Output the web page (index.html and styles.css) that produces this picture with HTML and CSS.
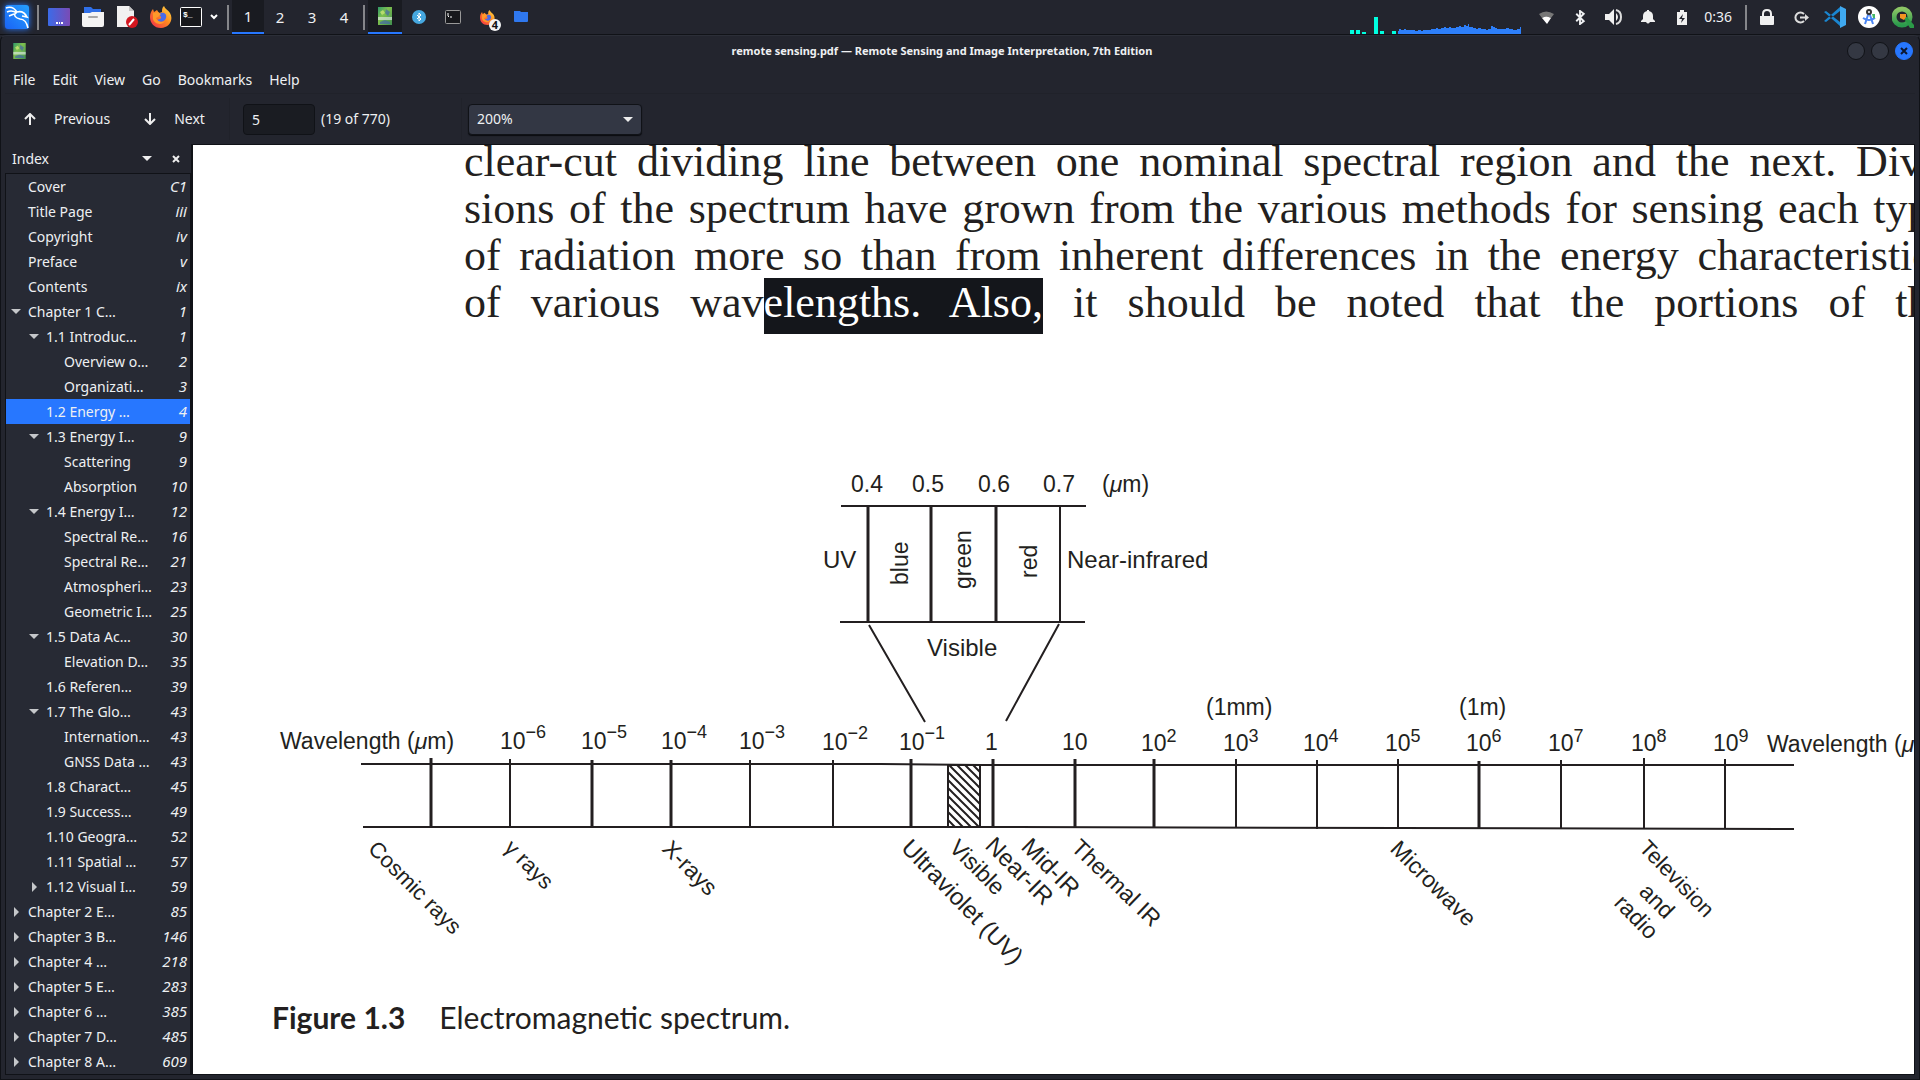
FILE: index.html
```html
<!DOCTYPE html>
<html lang="en">
<head>
<meta charset="utf-8">
<title>remote sensing.pdf — Remote Sensing and Image Interpretation, 7th Edition</title>
<link rel="stylesheet" href="styles.css">
</head>
<body>
<svg class="defs" width="0" height="0" aria-hidden="true">
  <defs>
    <linearGradient id="g-kali" x1="0" y1="1" x2="1" y2="0"><stop offset="0" stop-color="#1a63f5"/><stop offset="1" stop-color="#25a0ff"/></linearGradient>
    <linearGradient id="g-desk" x1="0" y1="0" x2="1" y2="0"><stop offset="0" stop-color="#3b6be8"/><stop offset="1" stop-color="#7a4bb5"/></linearGradient>
    <linearGradient id="g-fox" x1="1" y1="0" x2="0" y2="1"><stop offset="0" stop-color="#ffe14a"/><stop offset=".45" stop-color="#ff8a1f"/><stop offset="1" stop-color="#f2264f"/></linearGradient>
    <linearGradient id="g-book" x1="0" y1="0" x2="1" y2="1"><stop offset="0" stop-color="#2f9a6a"/><stop offset=".4" stop-color="#7fc04e"/><stop offset="1" stop-color="#3f8f4f"/></linearGradient>
    <linearGradient id="g-qgis" x1="0" y1="0" x2="0" y2="1"><stop offset="0" stop-color="#8cc665"/><stop offset="1" stop-color="#2a9a4c"/></linearGradient>
    <symbol id="i-fox" viewBox="0 0 22 22">
      <path fill="url(#g-fox)" d="M14 0c1 3 4 4 6 7 4 7-1 15-9 15C4 22 0 17 0 11c0-3 1-6 3-8l1 3 3-2 2 3 3-1c0-3 0-4 2-6z"/>
      <path fill="#4a6be8" d="M9 7l2 0c4-1 6 2 5 5-1 4-7 5-9 2l3-1c2-1 1-3-1-4z"/>
      <path fill="#ff9a2a" d="M3 7l5-1 3 2-3 3-2 1c2 4 6 5 9 3-3 5-11 3-12-2z"/>
    </symbol>
    <symbol id="i-book" viewBox="0 0 14 18">
      <rect width="14" height="18" fill="url(#g-book)"/>
      <path fill="#4668a8" opacity=".7" d="M8 2l4 3-2 4-3-3zM2 15l5-2 5 2v2H2z"/>
      <path fill="#d9e8dc" opacity=".7" d="M0 10h14v3H0z"/>
      <path fill="#b7dd6d" d="M2 5l3-2 2 3-3 2z"/>
    </symbol>
    <symbol id="i-bt" viewBox="0 0 12 16"><path fill="none" stroke="currentColor" stroke-width="2" d="M2 4l8 8-4 3V1l4 3-8 8"/></symbol>
  </defs>
</svg>

<header class="panel">
  <div class="launchers">
    <button class="tile kali" aria-label="Applications"><svg width="26" height="26" viewBox="0 0 26 26"><rect x="1" y="1" width="24" height="24" rx="3" fill="url(#g-kali)"/><path fill="none" stroke="#fff" stroke-width="1.6" d="M2 4c5-2 9 1 11 4M3 8c4-2 7-1 10 1M12 8c-3 4 0 6 4 7 4 0 7 4 8 9M13 8c4-1 8 1 10 5M20 9l3 4-5-1M5 12l5-2"/></svg></button>
    <span class="rule"></span>
    <button class="tile" aria-label="Show desktop"><svg width="22" height="18"><rect width="22" height="18" rx="1" fill="url(#g-desk)"/><path fill="#fff" d="M8 14h2v2H8zM11 14h1v2h-1zM13 14h2v2h-2z"/></svg></button>
    <button class="tile" aria-label="Files"><svg width="22" height="20"><path fill="#2f6fe8" d="M2 0h7l2 2h8v6H2z"/><path fill="#f4f4f4" d="M0 6h8l2-1h12v13q0 2-2 2H2q-2 0-2-2z"/><rect x="6" y="9" width="10" height="2" rx="1" fill="#a8a8a8"/></svg></button>
    <button class="tile" aria-label="Text editor"><svg width="22" height="22"><path fill="#f1f1f1" d="M1 0h12l5 5v16H1z"/><path fill="#c4c4c4" d="M13 0l5 5h-5z"/><circle cx="16" cy="16" r="6" fill="#d3161f"/><path stroke="#fff" stroke-width="2" d="M13 19l5-6"/></svg></button>
    <button class="tile" aria-label="Firefox"><svg width="22" height="22"><use href="#i-fox"/></svg></button>
    <button class="tile narrow" aria-label="Terminal"><svg width="22" height="20"><rect x=".5" y=".5" width="21" height="19" rx="1" fill="#17181c" stroke="#fff"/><text x="3" y="10" class="prompt">$_</text></svg></button>
    <button class="more" aria-label="More terminals"><svg width="8" height="6"><path fill="none" stroke="#fff" stroke-width="2" d="M1 1l3 3 3-3"/></svg></button>
    <span class="rule"></span>
    <nav class="spaces" aria-label="Workspaces">
      <button class="space current">1</button><button class="space">2</button><button class="space">3</button><button class="space">4</button>
    </nav>
    <span class="rule"></span>
    <button class="tile current" aria-label="Document viewer"><svg width="14" height="18"><use href="#i-book"/></svg></button>
    <button class="tile" aria-label="Bluetooth manager"><svg width="14" height="14"><circle cx="7" cy="7" r="7" fill="#46a8e0"/><path fill="none" stroke="#fff" d="M5 5l4 4-2 2V3l2 2-4 4"/></svg></button>
    <button class="tile" aria-label="Terminal window"><svg width="16" height="14"><rect x=".5" y=".5" width="15" height="13" rx="1" fill="#17181c" stroke="#999"/><path stroke="#fff" fill="none" d="M3 3v3l1 1M5 7h2"/></svg></button>
    <button class="tile" aria-label="Firefox windows"><svg width="15" height="15"><use href="#i-fox"/></svg><span class="count">4</span></button>
    <button class="tile" aria-label="Folder"><svg width="14" height="12"><path fill="#2f78ee" d="M0 0h6l1 1h7v9q0 1-1 1H1q-1 0-1-1z"/></svg></button>
  </div>
  <div class="tray">
    <svg class="graph" width="176" height="34">
      <path fill="#00ffe0" d="M0 30h4v4H0zM6 30h4v4H6zM12 32h4v2h-4zM24 17h4v17h-4zM30 31h4v3h-4zM42 31h4v3h-4z"/>
      <path fill="#2d7ffa" d="M48 34v-3h1v-2h2v1h3v-1h2v1h9v1h3v-1h3v1h2v-1h8v-1h5v-1h2v1h3v-1h3v-1h2v1h3v-1h2v1h5v-1h3v-1h2v1h3v-2h2v1h2v-2h1v3h4v1h3v1h2v-1h3v1h5v1h2v-1h3v-3h2v1h2v1h2v1h9v-1h3v1h4v1h4v-1h3v-2h1v7z"/>
    </svg>
    <button class="tile" aria-label="Network"><svg width="15" height="13"><path fill="#777" d="M0 3q7-5 15 0l-3 4q-5-3-9 0z"/><path fill="#fff" d="M3 7q4-3 9 0l-4 6z"/></svg></button>
    <button class="tile" aria-label="Bluetooth"><svg width="12" height="15"><use href="#i-bt"/></svg></button>
    <button class="tile" aria-label="Volume"><svg width="18" height="16"><path fill="#f0f0f0" d="M0 5h4l5-5v16l-5-5H0zM11 4q4 4 0 8z"/><path fill="none" stroke="#ddd" stroke-width="2" d="M11 1q5 1 5 7t-5 7"/></svg></button>
    <button class="tile" aria-label="Notifications"><svg width="14" height="14"><path fill="#f0f0f0" d="M6 0h2v1q4 1 4 5v3l2 2v1H0v-1l2-2V6q0-4 4-5zM5 12h4q-2 3-4 0z"/></svg></button>
    <button class="tile" aria-label="Battery"><svg width="10" height="15"><path fill="#f0f0f0" d="M3 0h4v2h3v13H0V2h3z"/><path fill="#23252e" d="M6 4L2 9h3l-1 4 4-5H5z"/></svg></button>
    <time class="clock">0:36</time>
    <span class="rule"></span>
    <button class="tile" aria-label="Lock screen"><svg width="14" height="16"><path fill="#f0f0f0" d="M0 7h14v8q0 1-1 1H1q-1 0-1-1z"/><path fill="none" stroke="#f0f0f0" stroke-width="2" d="M3 8V5q0-4 4-4t4 4v3"/></svg></button>
    <button class="tile" aria-label="Log out"><svg width="15" height="13"><path fill="none" stroke="#ddd" stroke-width="2" d="M10 3a5 5 0 1 0 0 7M6 6.500h6"/><path fill="#ddd" d="M11 3l4 3.500-4 3.500z"/></svg></button>
    <button class="tile" aria-label="Code editor"><svg width="22" height="22"><path fill="#1a86d0" d="M0 6l2-1 14 11v4zM0 15l2 1L16 5V1z"/><path fill="#3fa9f0" d="M16 0l6 3v16l-6 3z"/></svg></button>
    <button class="tile" aria-label="Android Studio"><svg width="22" height="22"><circle cx="11" cy="11" r="11" fill="#fff"/><path fill="none" stroke="#4b86f4" stroke-width="2" d="M11 6L7 18M11 6l4 12M5 12q6 4 12 0"/><circle cx="11" cy="6" r="2" fill="#fff" stroke="#333" stroke-width="2"/><path fill="#45b866" d="M14 8h3v4h-2z"/></svg></button>
    <button class="tile" aria-label="QGIS"><svg width="22" height="22"><circle cx="10" cy="11" r="8" fill="none" stroke="url(#g-qgis)" stroke-width="5"/><path fill="#2b9a47" d="M11 11l4 0 7 8v3h-4z"/><path fill="#f39421" d="M8 8h6v3l-2 3-4-2z"/></svg></button>
  </div>
</header>

<div class="window">
  <div class="titlebar">
    <svg width="13" height="16"><use href="#i-book"/></svg>
    <h1 class="title">remote sensing.pdf — Remote Sensing and Image Interpretation, 7th Edition</h1>
    <div class="controls">
      <button class="dot" aria-label="Minimize"></button><button class="dot" aria-label="Maximize"></button>
      <button class="dot close" aria-label="Close"><svg width="8" height="8"><path stroke="#0c1730" stroke-width="2" d="M1 1l6 6M7 1L1 7"/></svg></button>
    </div>
  </div>
  <nav class="menubar">
    <button>File</button><button>Edit</button><button>View</button><button>Go</button><button>Bookmarks</button><button>Help</button>
  </nav>
  <div class="toolbar">
    <div class="group steps">
      <button class="step"><svg width="12" height="12"><path fill="none" stroke="#eee" stroke-width="2" d="M6 12V2M1 6l5-5 5 5"/></svg>Previous</button>
      <button class="step"><svg width="12" height="12"><path fill="none" stroke="#eee" stroke-width="2" d="M6 0v10M1 6l5 5 5-5"/></svg>Next</button>
    </div>
    <div class="group pager">
      <input id="page" class="page-box" type="text" value="5" aria-label="Page">
      <label for="page">(19 of 770)</label>
    </div>
    <div class="group zoomer">
      <select class="zoom" aria-label="Zoom"><option>200%</option></select>
    </div>
  </div>

  <div class="content">
    <aside class="sidebar">
      <div class="side-head">
        <span class="side-title">Index</span>
        <button aria-label="Choose side pane"><svg width="10" height="5"><path fill="#eee" d="M0 0h10L5 5z"/></svg></button>
        <button aria-label="Close side pane"><svg width="8" height="8"><path stroke="#eee" stroke-width="2" d="M1 1l6 6M7 1L1 7"/></svg></button>
      </div>
      <ul class="tree">
        <li><a href="#">Cover<i>C1</i></a></li>
        <li><a href="#">Title Page<i>iii</i></a></li>
        <li><a href="#">Copyright<i>iv</i></a></li>
        <li><a href="#">Preface<i>v</i></a></li>
        <li><a href="#">Contents<i>ix</i></a></li>
        <li class="open"><a href="#">Chapter 1 C…<i>1</i></a></li>
        <li class="l2 open"><a href="#">1.1 Introduc…<i>1</i></a></li>
        <li class="l3"><a href="#">Overview o…<i>2</i></a></li>
        <li class="l3"><a href="#">Organizati…<i>3</i></a></li>
        <li class="l2 selected"><a href="#">1.2 Energy …<i>4</i></a></li>
        <li class="l2 open"><a href="#">1.3 Energy I…<i>9</i></a></li>
        <li class="l3"><a href="#">Scattering<i>9</i></a></li>
        <li class="l3"><a href="#">Absorption<i>10</i></a></li>
        <li class="l2 open"><a href="#">1.4 Energy I…<i>12</i></a></li>
        <li class="l3"><a href="#">Spectral Re…<i>16</i></a></li>
        <li class="l3"><a href="#">Spectral Re…<i>21</i></a></li>
        <li class="l3"><a href="#">Atmospheri…<i>23</i></a></li>
        <li class="l3"><a href="#">Geometric I…<i>25</i></a></li>
        <li class="l2 open"><a href="#">1.5 Data Ac…<i>30</i></a></li>
        <li class="l3"><a href="#">Elevation D…<i>35</i></a></li>
        <li class="l2"><a href="#">1.6 Referen…<i>39</i></a></li>
        <li class="l2 open"><a href="#">1.7 The Glo…<i>43</i></a></li>
        <li class="l3"><a href="#">Internation…<i>43</i></a></li>
        <li class="l3"><a href="#">GNSS Data …<i>43</i></a></li>
        <li class="l2"><a href="#">1.8 Charact…<i>45</i></a></li>
        <li class="l2"><a href="#">1.9 Success…<i>49</i></a></li>
        <li class="l2"><a href="#">1.10 Geogra…<i>52</i></a></li>
        <li class="l2"><a href="#">1.11 Spatial …<i>57</i></a></li>
        <li class="l2 shut"><a href="#">1.12 Visual I…<i>59</i></a></li>
        <li class="shut"><a href="#">Chapter 2 E…<i>85</i></a></li>
        <li class="shut"><a href="#">Chapter 3 B…<i>146</i></a></li>
        <li class="shut"><a href="#">Chapter 4 …<i>218</i></a></li>
        <li class="shut"><a href="#">Chapter 5 E…<i>283</i></a></li>
        <li class="shut"><a href="#">Chapter 6 …<i>385</i></a></li>
        <li class="shut"><a href="#">Chapter 7 D…<i>485</i></a></li>
        <li class="shut"><a href="#">Chapter 8 A…<i>609</i></a></li>
      </ul>
    </aside>

    <main class="document">
      <p class="prose">
        <span class="line">clear-cut dividing line between one nominal spectral region and the next. Divi-</span>
        <span class="line">sions of the spectrum have grown from the various methods for sensing each type</span>
        <span class="line">of radiation more so than from inherent differences in the energy characteristics</span>
        <span class="line">of various wav<mark>elengths. Also,</mark> it should be noted that the portions of the</span>
      </p>
      <figure class="figure">
        <svg class="spectrum" width="1800" height="550" viewBox="193 440 1800 550" role="img" aria-label="Electromagnetic spectrum">
          <defs><pattern id="hatch" width="8" height="8" patternUnits="userSpaceOnUse"><path stroke="#231f20" stroke-width="2" d="M-1-1l10 10M-1 7l2 2M7-1l2 2"/></pattern></defs>
          <g class="ink">
            <path class="thin" d="M841 506h245M840 622h245"/>
            <path d="M868 505v117M931 506v116M996 506v116"/>
            <path class="thin" d="M1060 506v116M869 625l56 97M1059 624l-53 97"/>
            <path class="thin" d="M361 764h520l100 1h813M363 827h620l811 2"/>
            <path d="M431 758v69M592 760v67M671 760v67M911 759v68M993 759v68M1075 759v69M1154 759v69M1479 761v68"/>
            <path class="thin" d="M510 759v68M750 760v67M833 760v67M1236 759v69M1317 760v69M1398 759v70M1561 760v69M1644 758v71M1725 759v70"/>
            <rect x="948" y="765" width="32" height="62" fill="url(#hatch)"/>
          </g>
          <g class="lab">
            <text x="851" y="492">0.4</text><text x="912" y="492">0.5</text><text x="978" y="492">0.6</text><text x="1043" y="492">0.7</text>
            <text x="1102" y="492">(<tspan class="mu">μ</tspan>m)</text>
            <text class="wide" x="823" y="568">UV</text><text class="wide" x="1067" y="568">Near-infrared</text><text class="wide" x="927" y="656">Visible</text>
            <text transform="translate(908 585) rotate(-90)">blue</text>
            <text transform="translate(971 589) rotate(-90)">green</text>
            <text transform="translate(1037 578) rotate(-90)">red</text>
            <text x="280" y="749">Wavelength (<tspan class="mu">μ</tspan>m)</text>
            <text x="500" y="749">10<tspan class="sup" dy="-11">−6</tspan></text>
            <text x="581" y="749">10<tspan class="sup" dy="-11">−5</tspan></text>
            <text x="661" y="749">10<tspan class="sup" dy="-11">−4</tspan></text>
            <text x="739" y="749">10<tspan class="sup" dy="-11">−3</tspan></text>
            <text x="822" y="750">10<tspan class="sup" dy="-11">−2</tspan></text>
            <text x="899" y="750">10<tspan class="sup" dy="-11">−1</tspan></text>
            <text x="985" y="750">1</text><text x="1062" y="750">10</text>
            <text x="1141" y="751">10<tspan class="sup" dy="-9">2</tspan></text>
            <text x="1223" y="751">10<tspan class="sup" dy="-9">3</tspan></text>
            <text x="1303" y="751">10<tspan class="sup" dy="-9">4</tspan></text>
            <text x="1385" y="751">10<tspan class="sup" dy="-9">5</tspan></text>
            <text x="1466" y="751">10<tspan class="sup" dy="-9">6</tspan></text>
            <text x="1548" y="751">10<tspan class="sup" dy="-9">7</tspan></text>
            <text x="1631" y="751">10<tspan class="sup" dy="-9">8</tspan></text>
            <text x="1713" y="751">10<tspan class="sup" dy="-9">9</tspan></text>
            <text x="1767" y="752">Wavelength (<tspan class="mu">μ</tspan>m)</text>
            <text x="1206" y="715">(1mm)</text><text x="1459" y="715">(1m)</text>
            <text class="slim" transform="translate(367 850) rotate(45)">Cosmic rays</text>
            <text class="slim" transform="translate(503 849) rotate(45)">γ rays</text>
            <text transform="translate(661 850) rotate(45)">X-rays</text>
            <text class="wide" transform="translate(900 849) rotate(46)">Ultraviolet (UV)</text>
            <text transform="translate(948 849) rotate(45)">Visible</text>
            <text class="wide" transform="translate(984 847) rotate(45)">Near-IR</text>
            <text class="wide" transform="translate(1020 848) rotate(45)">Mid-IR</text>
            <text transform="translate(1070 849) rotate(44)">Thermal IR</text>
            <text transform="translate(1389 850) rotate(45)">Microwave</text>
            <text class="slim" transform="translate(1638 849) rotate(46)">Television</text>
            <text transform="translate(1638 893) rotate(45)">and</text>
            <text transform="translate(1613 904) rotate(46)">radio</text>
          </g>
        </svg>
        <figcaption class="caption"><b>Figure 1.3</b><span>Electromagnetic spectrum.</span></figcaption>
      </figure>
    </main>
  </div>
</div>
</body>
</html>
```

FILE: styles.css
```css
:root {
  --bg: #23252e;
  --edge: #101217;
  --accent: #2777ff;
  --text: #eef0f2;
  --ink: #231f20;
}

* { box-sizing: border-box; }

body {
  margin: 0;
  height: 100vh;
  display: flex;
  flex-direction: column;
  overflow: hidden;
  background: var(--bg);
  color: var(--text);
  font: 14px/20px "Noto Sans", sans-serif;
}

button {
  border: 0;
  padding: 0;
  background: none;
  color: inherit;
  font: inherit;
}

svg { display: block; }
.defs { position: absolute; }

/* Desktop panel */
.panel {
  flex: none;
  height: 35px;
  display: flex;
  justify-content: space-between;
  border-bottom: 1px solid var(--edge);
}
.launchers, .tray { display: flex; align-items: stretch; height: 34px; }
.tile {
  position: relative;
  width: 34px;
  display: flex;
  align-items: center;
  justify-content: center;
}
.tile.narrow { width: 26px; }
.kali svg { filter: drop-shadow(0 0 3px #2777ff); }
.tile.current, .space.current {
  background: #191b21;
  border-bottom: 2px solid var(--accent);
}
.rule {
  width: 2px;
  margin: 5px 3px 4px;
  background: #85868a;
}
.more { width: 20px; display: flex; align-items: center; justify-content: center; }
.spaces { display: flex; }
.space { width: 32px; font-size: 15px; }
.prompt { font: bold 8px "Liberation Mono", monospace; fill: #fff; }
.count {
  position: absolute;
  right: 3px;
  bottom: 3px;
  width: 12px;
  height: 12px;
  border-radius: 6px;
  background: #f4f4f4;
  color: #111;
  font: bold 11px/12px "Noto Sans", sans-serif;
  text-align: center;
}
.graph { margin-right: 3px; }
.clock { padding: 0 10px 0 5px; line-height: 34px; }

/* Viewer window */
.window {
  flex: 1;
  min-height: 0;
  display: flex;
  flex-direction: column;
  border: 1px solid var(--edge);
  border-top-color: #2b2e37;
  border-radius: 6px 6px 0 0;
}
.titlebar {
  display: grid;
  grid-template-columns: 1fr auto 1fr;
  align-items: center;
  height: 30px;
  padding: 0 6px 0 12px;
}
.title { margin: 0 42px 0 0; font-size: 11px; font-weight: 700; }
.controls { display: flex; justify-content: flex-end; gap: 6px; }
.dot {
  width: 18px;
  height: 18px;
  border: 1px solid var(--edge);
  border-radius: 9px;
  background: #343843;
}
.dot.close {
  display: flex;
  align-items: center;
  justify-content: center;
  border-color: var(--accent);
  background: var(--accent);
}
.menubar {
  display: flex;
  gap: 17px;
  height: 28px;
  margin: 0 4px;
  padding: 1px 0 0 8px;
  border-bottom: 1px solid #20222a;
}
.toolbar { display: flex; align-items: center; height: 50px; }
.group { display: flex; align-items: center; height: 42px; }
.steps { width: 229px; padding-left: 23px; gap: 34px; border-right: 1px solid #20222a; }
.step { display: flex; align-items: center; gap: 18px; }
.pager { width: 232px; padding-left: 13px; gap: 6px; border-right: 1px solid #20222a; }
.page-box, .zoom {
  height: 31px;
  border: 1px solid var(--edge);
  border-radius: 4px;
  padding: 0 8px;
  color: var(--text);
  font: inherit;
}
.page-box { width: 72px; background: #1a1c22; }
.zoomer { padding-left: 6px; }
.zoom {
  width: 174px;
  appearance: none;
  background-color: #333744;
  background-image: url("data:image/svg+xml,%3Csvg xmlns='http://www.w3.org/2000/svg' width='10' height='5'%3E%3Cpath fill='%23eee' d='M0 0h10L5 5z'/%3E%3C/svg%3E");
  background-repeat: no-repeat;
  background-position: right 8px center;
  box-shadow: 0 1px 1px #0b0c10;
}

/* Side pane and page */
.content { flex: 1; min-height: 0; display: flex; padding: 0 4px 4px; }
.sidebar { flex: none; width: 186px; display: flex; flex-direction: column; min-height: 0; }
.side-head { display: flex; align-items: center; gap: 20px; height: 29px; flex: none; padding: 0 11px 0 7px; }
.side-title { flex: 1; }
.tree {
  flex: 1;
  min-height: 0;
  margin: 0;
  padding: 0;
  overflow: hidden;
  list-style: none;
  background: #272a34;
  border: 1px solid var(--edge);
}
.tree li { position: relative; padding-left: 22px; }
.tree .l2 { padding-left: 40px; }
.tree .l3 { padding-left: 58px; }
.tree a {
  display: flex;
  justify-content: space-between;
  height: 25px;
  padding-right: 3px;
  line-height: 25px;
  color: inherit;
  text-decoration: none;
  white-space: nowrap;
}
.tree i { font-size: 15px; }
.tree .selected { background: var(--accent); }
.open::before, .shut::before {
  content: "";
  position: absolute;
  top: 10px;
  left: 5px;
  border: 5px solid transparent;
}
.open::before { border-top-color: #c5c7ca; border-bottom-width: 0; }
.shut::before { top: 8px; left: 8px; border-left-color: #c5c7ca; border-right-width: 0; }
.l2.open::before { left: 23px; }
.l2.shut::before { left: 26px; }

.document {
  flex: 1;
  min-width: 0;
  overflow: hidden;
  border: 1px solid var(--edge);
  border-width: 1px 1px 1px 2px;
  background: #fff;
  color: var(--ink);
}
.prose {
  width: 1485px;
  margin: -7px 0 0 271px;
  font: 44px/47px "Liberation Serif", serif;
}
.line { display: block; text-align: justify; text-align-last: justify; white-space: nowrap; }
mark { padding: 0 0 7px; background: #14161b; color: #fff; }
.figure { margin: 114px 0 0; }
.ink { fill: none; stroke: var(--ink); stroke-width: 3; }
.ink .thin, .ink rect { stroke-width: 2; }
.lab { font: 23px "Liberation Sans", sans-serif; fill: var(--ink); }
.wide { font-size: 24px; }
.slim { font-size: 22px; }
.sup { font-size: 18px; }
.mu { font-style: italic; }
.caption {
  display: flex;
  gap: 34px;
  padding: 9px 0 0 79px;
  font: 30px/36px Lato, sans-serif;
}
```
